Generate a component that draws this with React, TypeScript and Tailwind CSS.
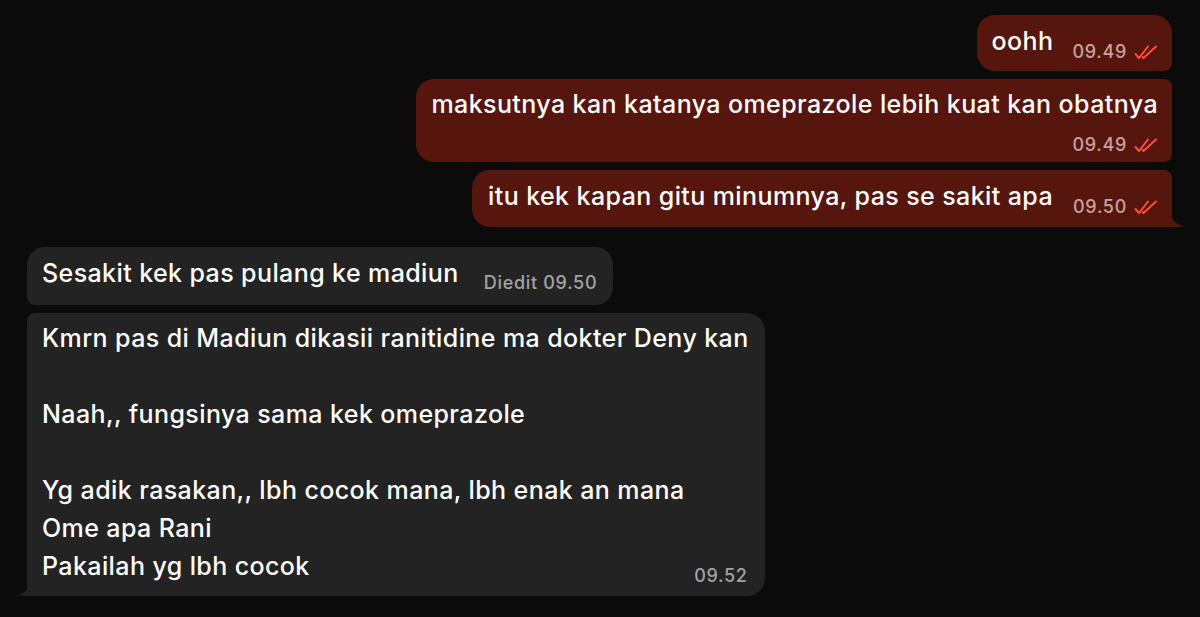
import type { ReactNode } from "react";

const font = { fontFamily: "Inter, 'Noto Sans', sans-serif" };

function DoubleCheck() {
  return (
    <svg width="24" height="15" viewBox="0 0 24 15" fill="none" className="ml-[7px]">
      <path d="M1.5 9 L5 13 L14 1.5" stroke="#ff4d36" strokeWidth="2" strokeLinecap="round" strokeLinejoin="round" />
      <path d="M8.5 12 L9.5 13 L22 1.5" stroke="#ff4d36" strokeWidth="2" strokeLinecap="round" strokeLinejoin="round" />
    </svg>
  );
}

function OutTime({ time }: { time: string }) {
  return (
    <span className="flex items-center text-[18px] leading-[22px] tracking-[0.7px] font-medium text-[#c9a19c] whitespace-nowrap">
      {time}
      <DoubleCheck />
    </span>
  );
}

function InTime({ time }: { time: string }) {
  return (
    <span className="text-[18px] leading-[22px] tracking-[0.7px] font-medium text-[#a3a3a3] whitespace-nowrap">
      {time}
    </span>
  );
}

function OutTail() {
  return (
    <svg
      width="14"
      height="14"
      viewBox="0 0 14 14"
      className="absolute bottom-0 right-[-13px]"
    >
      <path d="M0 0 C0.5 7 4 11 13.5 13.5 C9 14.2 4 14 0 14 Z" fill="#57160d" />
    </svg>
  );
}

function InTail() {
  return (
    <svg
      width="14"
      height="16"
      viewBox="0 0 14 16"
      className="absolute bottom-0 left-[-11px]"
    >
      <path d="M14 0 C13.5 8 10 13 0.5 15.5 C5 16.2 10 16 14 16 Z" fill="#232323" />
    </svg>
  );
}

function Row({ side, children }: { side: "in" | "out"; children: ReactNode }) {
  return (
    <div className={side === "out" ? "flex justify-end pr-[28px]" : "flex justify-start pl-[27px]"}>
      {children}
    </div>
  );
}

const msg = "text-[25px] leading-[38px] font-medium tracking-[0.4px] whitespace-nowrap";

export default function App() {
  return (
    <div
      className="w-[1200px] h-[617px] overflow-hidden bg-[#0b0b0b] text-white pt-[15px] flex flex-col"
      style={font}
    >
      {/* outgoing */}
      <div className="flex flex-col gap-[8px]">
        <Row side="out">
          <div className="flex items-end rounded-[18px] rounded-br-[8px] bg-[#57160d] pl-[15px] pr-[14px] pt-[7px] pb-[11px]">
            <span className={msg}>oohh</span>
            <span className="ml-[19px] translate-y-[3px]">
              <OutTime time="09.49" />
            </span>
          </div>
        </Row>
        <Row side="out">
          <div className="flex flex-col rounded-[18px] rounded-r-[8px] bg-[#57160d] pl-[15px] pr-[14px] pt-[6px] pb-[6px]">
            <span className={msg}>maksutnya kan katanya omeprazole lebih kuat kan obatnya</span>
            <span className="flex justify-end mt-[11px]">
              <OutTime time="09.49" />
            </span>
          </div>
        </Row>
        <Row side="out">
          <div className="relative flex items-end rounded-[18px] rounded-tr-[8px] rounded-br-none bg-[#57160d] pl-[16px] pr-[14px] pt-[7px] pb-[12px]">
            <span className={msg}>itu kek kapan gitu minumnya, pas se sakit apa</span>
            <span className="ml-[20px] translate-y-[3px]">
              <OutTime time="09.50" />
            </span>
            <OutTail />
          </div>
        </Row>
      </div>

      {/* incoming */}
      <div className="flex flex-col gap-[8px] mt-[20px]">
        <Row side="in">
          <div className="flex items-end rounded-[18px] rounded-bl-[8px] bg-[#232323] pl-[15px] pr-[16px] pt-[7px] pb-[13px]">
            <span className={msg}>Sesakit kek pas pulang ke madiun</span>
            <span className="ml-[25px] translate-y-[3px]">
              <InTime time="Diedit 09.50" />
            </span>
          </div>
        </Row>
        <Row side="in">
          <div className="relative flex items-end rounded-[18px] rounded-tl-[8px] rounded-bl-none bg-[#232323] pl-[15px] pr-[16px] pt-[6px] pb-[11px]">
            <div className={`flex flex-col ${msg}`}>
              <span>Kmrn pas di Madiun dikasii ranitidine ma dokter Deny kan</span>
              <span className="h-[38px]" />
              <span>Naah,, fungsinya sama kek omeprazole</span>
              <span className="h-[38px]" />
              <span>Yg adik rasakan,, lbh cocok mana, lbh enak an mana</span>
              <span>Ome apa Rani</span>
              <span>Pakailah yg lbh cocok</span>
            </div>
            <span className="absolute right-[17px] bottom-[8px]">
              <InTime time="09.52" />
            </span>
            <InTail />
          </div>
        </Row>
      </div>
    </div>
  );
}
